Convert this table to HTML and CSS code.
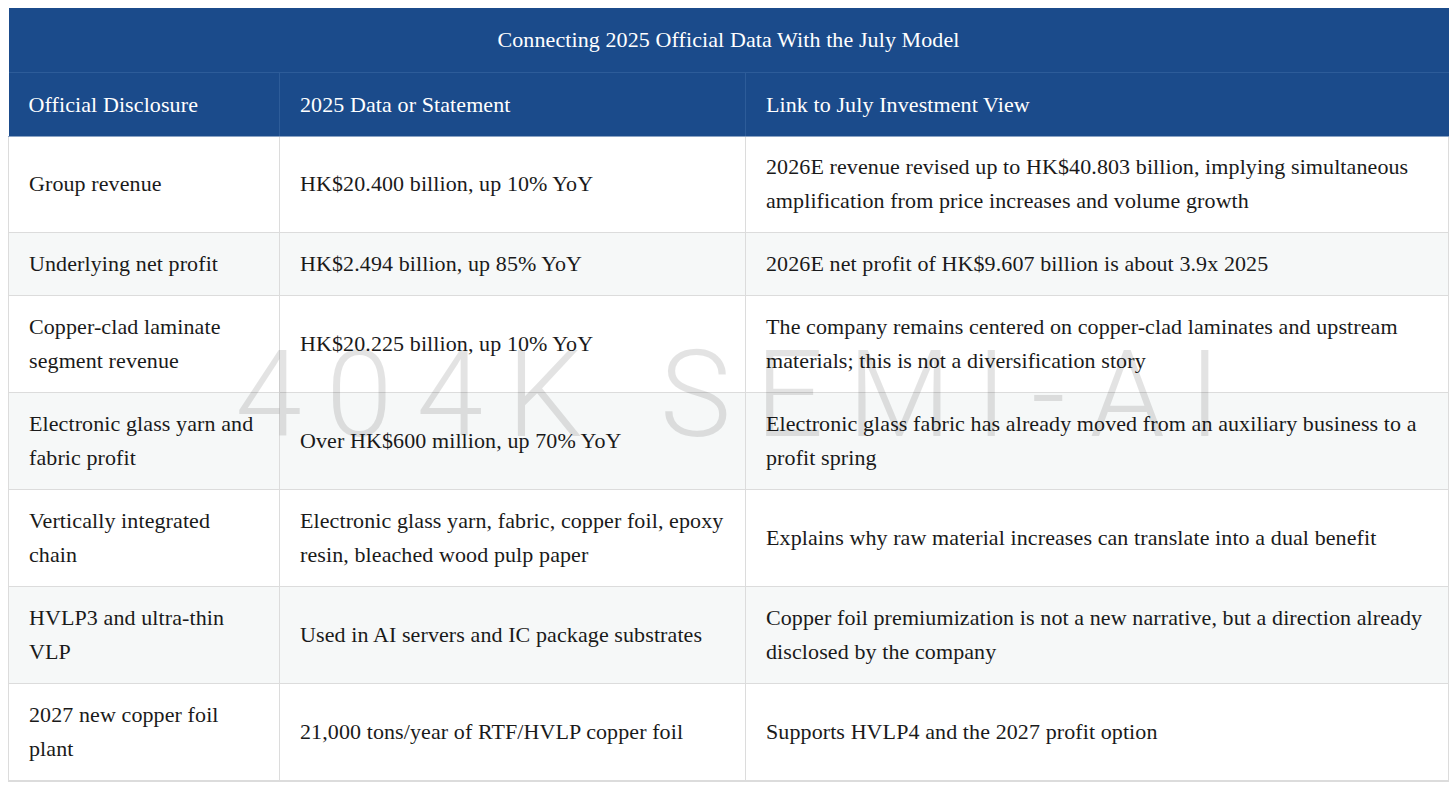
FILE: index.html
```html
<!DOCTYPE html>
<html lang="en">
<head>
<meta charset="utf-8">
<title>Connecting 2025 Official Data With the July Model</title>
<link rel="stylesheet" href="styles.css">
</head>
<body>
<div class="wrap">
  <table class="data">
    <colgroup>
      <col class="c1"><col class="c2"><col class="c3">
    </colgroup>
    <thead>
      <tr class="title-row"><th colspan="3">Connecting 2025 Official Data With the July Model</th></tr>
      <tr class="head-row"><th>Official Disclosure</th><th>2025 Data or Statement</th><th>Link to July Investment View</th></tr>
    </thead>
    <tbody>
      <tr><td>Group revenue</td><td>HK$20.400 billion, up 10% YoY</td><td>2026E revenue revised up to HK$40.803 billion, implying simultaneous amplification from price increases and volume growth</td></tr>
      <tr><td>Underlying net profit</td><td>HK$2.494 billion, up 85% YoY</td><td>2026E net profit of HK$9.607 billion is about 3.9x 2025</td></tr>
      <tr><td>Copper-clad laminate segment revenue</td><td>HK$20.225 billion, up 10% YoY</td><td>The company remains centered on copper-clad laminates and upstream materials; this is not a diversification story</td></tr>
      <tr><td>Electronic glass yarn and fabric profit</td><td>Over HK$600 million, up 70% YoY</td><td>Electronic glass fabric has already moved from an auxiliary business to a profit spring</td></tr>
      <tr><td>Vertically integrated chain</td><td>Electronic glass yarn, fabric, copper foil, epoxy resin, bleached wood pulp paper</td><td>Explains why raw material increases can translate into a dual benefit</td></tr>
      <tr><td>HVLP3 and ultra-thin VLP</td><td>Used in AI servers and IC package substrates</td><td>Copper foil premiumization is not a new narrative, but a direction already disclosed by the company</td></tr>
      <tr><td>2027 new copper foil plant</td><td>21,000 tons/year of RTF/HVLP copper foil</td><td>Supports HVLP4 and the 2027 profit option</td></tr>
    </tbody>
  </table>
  <div class="watermark" aria-hidden="true">404K SEMI-AI</div>
</div>
</body>
</html>
```

FILE: styles.css
```css
html, body {
  margin: 0;
  padding: 0;
  background: #ffffff;
}
body {
  padding: 8px;
  font-family: "Liberation Serif", "DejaVu Serif", serif;
  color: #1a1a1a;
}
.wrap {
  position: relative;
  width: 1440px;
}
.data {
  width: 1440px;
  border-collapse: collapse;
  table-layout: fixed;
  font-size: 22px;
  line-height: 34px;
  letter-spacing: 0.1px;
}
.c1 { width: 271px; }
.c2 { width: 466px; }
.c3 { width: 703px; }
.data th {
  background: #1b4b8b;
  color: #ffffff;
  font-weight: normal;
  text-align: left;
  padding: 15px 20px;
}
.title-row th {
  text-align: center;
  border-bottom: 1px solid #2d5c99;
}
.head-row th {
  border-left: 1px solid #2d5c99;
  border-bottom: 1px solid #8aa3c4;
  padding-bottom: 14px;
}
.head-row th:first-child { border-left: none; }
.data td {
  padding: 14px 20px;
  vertical-align: middle;
  border: 1px solid #dcdcdc;
}
.data tbody tr:first-child td {
  padding-top: 13px;
}
.data tbody tr:nth-child(even) td {
  background: #f6f8f8;
}
.data tbody tr:last-child td {
  border-bottom: 2px solid #dcdcdc;
}
.watermark {
  position: absolute;
  inset: 0;
  display: flex;
  align-items: center;
  justify-content: center;
  padding-left: 24px;
  font-family: "Roboto", "Liberation Sans", sans-serif;
  font-weight: 300;
  font-size: 120px;
  letter-spacing: 24px;
  color: rgba(0, 0, 0, 0.11);
  pointer-events: none;
  white-space: nowrap;
}
```
